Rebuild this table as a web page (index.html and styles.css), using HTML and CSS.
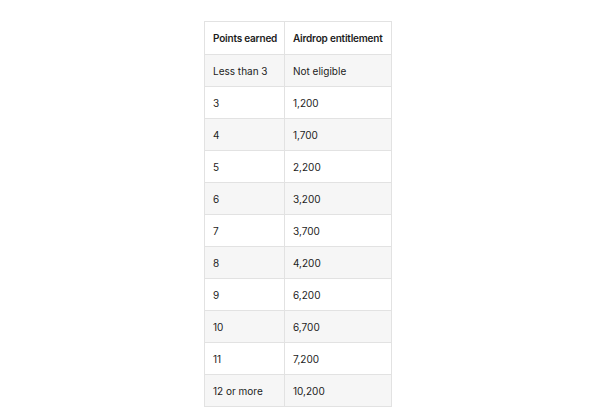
FILE: index.html
```html
<!DOCTYPE html>
<html>
<head>
<meta charset="utf-8">
<link rel="stylesheet" href="styles.css">
</head>
<body>
<div class="page">
<table class="points">
<thead>
<tr><th class="c1">Points earned</th><th class="c2">Airdrop entitlement</th></tr>
</thead>
<tbody>
<tr><td>Less than 3</td><td>Not eligible</td></tr>
<tr><td>3</td><td>1,200</td></tr>
<tr><td>4</td><td>1,700</td></tr>
<tr><td>5</td><td>2,200</td></tr>
<tr><td>6</td><td>3,200</td></tr>
<tr><td>7</td><td>3,700</td></tr>
<tr><td>8</td><td>4,200</td></tr>
<tr><td>9</td><td>6,200</td></tr>
<tr><td>10</td><td>6,700</td></tr>
<tr><td>11</td><td>7,200</td></tr>
<tr><td>12 or more</td><td>10,200</td></tr>
</tbody>
</table>
</div>
</body>
</html>
```
FILE: styles.css
```css
html, body {
  margin: 0;
  padding: 0;
  background: #ffffff;
}
.page {
  padding: 21px 0 0 204px;
  font-family: Inter, "Noto Sans", sans-serif;
  color: #1c1c1c;
}
.points {
  border-collapse: collapse;
  width: 188px;
  font-size: 10px;
}
.points th, .points td {
  border: 1px solid #e2e2e2;
  text-align: left;
  padding: 0 0 0 8px;
  white-space: nowrap;
}
.points th {
  height: 32px;
  font-weight: 600;
  font-size: 10px;
  letter-spacing: -0.2px;
}
.points td {
  height: 31px;
  font-weight: 400;
}
.points .c1 {
  width: 71px;
}
.points tbody tr:nth-child(odd) td {
  background: #f6f6f6;
}
```
